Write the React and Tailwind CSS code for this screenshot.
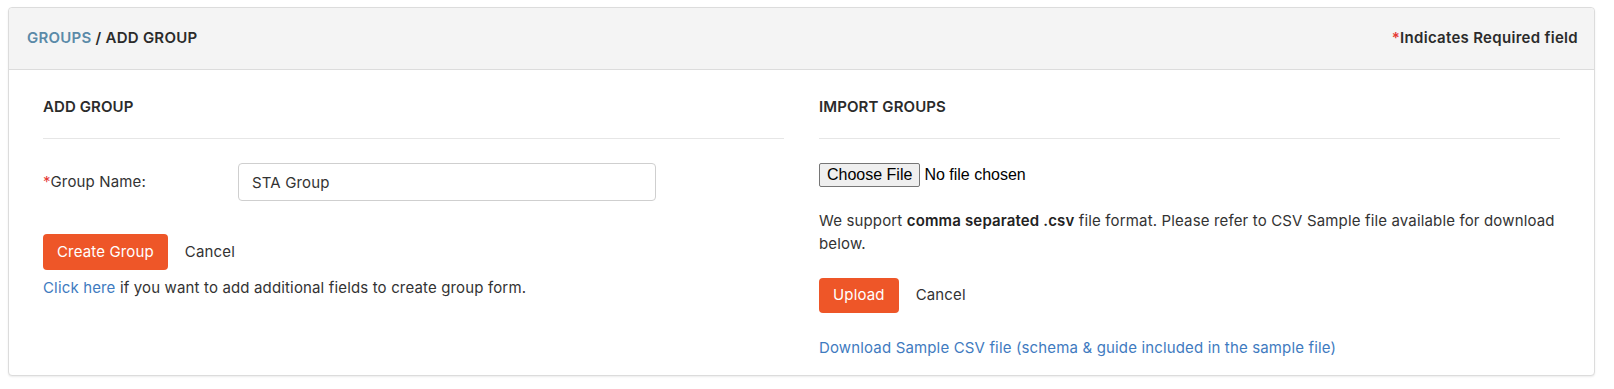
import { useState } from 'react'

const FONT = { fontFamily: 'Inter, "Noto Sans", sans-serif' }

function SectionTitle({ children }) {
  return (
    <div className="pt-[26px] pb-[20px] border-b border-[#e6e6e6]">
      <h2 className="text-[15px] leading-[22px] font-semibold text-[#2b2b2b] tracking-[0.1px]">{children}</h2>
    </div>
  )
}

function AddGroup() {
  const [name, setName] = useState('STA Group')
  return (
    <div>
      <SectionTitle>ADD GROUP</SectionTitle>
      <div className="flex items-center mt-[24px]">
        <label className="w-[195px] text-[15px] text-[#333]">
          <span className="text-[#e53935]">*</span>Group Name:
        </label>
        <input
          value={name}
          onChange={e => setName(e.target.value)}
          className="w-[418px] h-[38px] border border-[#cfcfcf] rounded-[4px] px-[13px] text-[15px] tracking-[0.15px] text-[#333] outline-none"
          style={FONT}
        />
      </div>
      <div className="flex items-center mt-[33px]">
        <button className="h-[36px] px-[14px] bg-[#ee5628] text-white text-[15px] tracking-[0.15px] rounded-[4px]" style={FONT}>
          Create Group
        </button>
        <button className="ml-[17px] text-[15px] tracking-[0.15px] text-[#333]" style={FONT}>Cancel</button>
      </div>
      <p className="mt-[7px] text-[15px] leading-[22px] text-[#333]">
        <a href="#" className="text-[#3f7bbf]">Click here</a> if you want to add additional fields to create group form.
      </p>
    </div>
  )
}

function ImportGroups() {
  return (
    <div className="pb-[16px]">
      <SectionTitle>IMPORT GROUPS</SectionTitle>
      <div className="flex items-center mt-[24px] h-[24px] tracking-normal" style={{ fontFamily: '"Liberation Sans", Arial, sans-serif' }}>
        <button className="h-[24px] px-[7px] border border-[#767676] rounded-[2px] bg-[#efefef] text-[16px] text-black leading-none">
          Choose File
        </button>
        <span className="ml-[4px] text-[16px] text-black">No file chosen</span>
      </div>
      <p className="mt-[22px] text-[15px] leading-[23px] text-[#333]">
        We support <b className="font-semibold text-[#222]">comma separated .csv</b> file format. Please refer to CSV Sample file available for download below.
      </p>
      <div className="flex items-center mt-[23px]">
        <button className="h-[35px] px-[14px] bg-[#ee5628] text-white text-[15px] tracking-[0.15px] rounded-[4px]" style={FONT}>
          Upload
        </button>
        <button className="ml-[17px] text-[15px] tracking-[0.15px] text-[#333]" style={FONT}>Cancel</button>
      </div>
      <a href="#" className="block mt-[24px] text-[15px] leading-[22px] text-[#3f7bbf]">
        Download Sample CSV file (schema &amp; guide included in the sample file)
      </a>
    </div>
  )
}

export default function App() {
  return (
    <div className="bg-white min-h-[389px] pt-[7px] pl-[8px] pr-[19px] tracking-[0.15px]" style={FONT}>
      <div className="border border-[#dcdcdc] rounded-[4px] shadow-[0_1px_2px_rgba(0,0,0,0.08)] bg-white">
        <div className="h-[62px] bg-[#f4f4f4] border-b border-[#dcdcdc] flex items-center justify-between pl-[18px] pr-[16px] rounded-t-[4px]">
          <div className="text-[15px] font-semibold tracking-[0.25px]">
            <a href="#" className="text-[#5a8aa8]">GROUPS</a>
            <span className="text-[#2b2b2b]"> / ADD GROUP</span>
          </div>
          <div className="text-[15px] font-semibold text-[#2b2b2b] tracking-[0.3px]">
            <span className="text-[#e53935]">*</span>Indicates Required field
          </div>
        </div>
        <div className="grid grid-cols-2 gap-[35px] px-[34px]">
          <AddGroup />
          <ImportGroups />
        </div>
      </div>
    </div>
  )
}
